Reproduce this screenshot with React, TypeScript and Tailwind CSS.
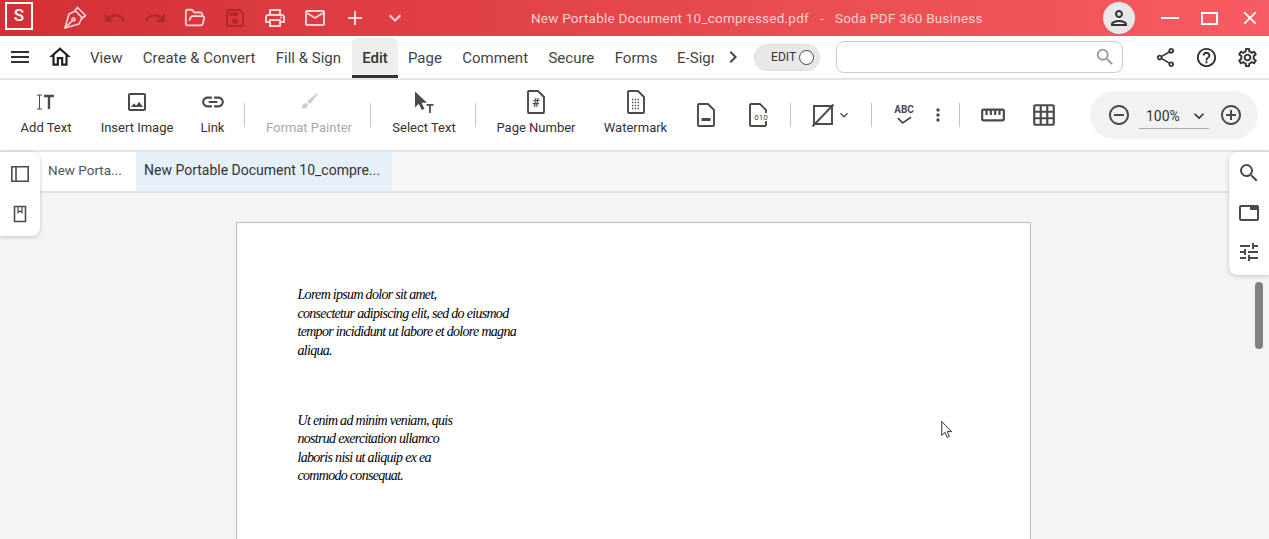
import React from 'react';
import {
  MdMenu, MdOutlineHome, MdUndo, MdRedo, MdOutlinePrint, MdMailOutline, MdAdd, MdExpandMore,
  MdOutlinePerson, MdClose, MdChevronRight, MdSearch, MdOutlineShare, MdHelpOutline, MdOutlineSettings,
  MdOutlineImage, MdLink, MdMoreVert, MdGridOn, MdOutlineStraighten, MdRemoveCircleOutline, MdAddCircleOutline,
  MdTune, MdOutlineSave,
} from 'react-icons/md';
import { FolderOpen } from 'lucide-react';

const tabs = ['View', 'Create & Convert', 'Fill & Sign', 'Edit', 'Page', 'Comment', 'Secure', 'Forms'];

function PenNib() {
  return (
    <svg viewBox="0 0 24 24" className="w-6 h-6" fill="none" stroke="currentColor" strokeWidth="1.7" strokeLinejoin="round">
      <path d="M14.500 1.500 22.500 9.500 19.500 12 12 4.500Z" />
      <path d="M12.500 5 6 8 2 22l14-4 3-6.500" />
      <path d="M2 22l7-7" />
      <circle cx="10.500" cy="13.500" r="1.500" />
    </svg>
  );
}

function ToolButton({ icon, label, disabled, w }: { icon: React.ReactNode; label: string; disabled?: boolean; w: string }) {
  return (
    <div className={`flex flex-col items-center shrink-0 -mt-[6px] ${w} ${disabled ? 'text-[#aaaaaa]' : 'text-[#333333]'}`}>
      <div className={`h-[26px] flex items-center justify-center ${disabled ? 'text-[#cccccc]' : 'text-[#4a4a4a]'}`}>{icon}</div>
      <span className="text-[13px] leading-4 mt-[5px] whitespace-nowrap">{label}</span>
    </div>
  );
}

function Divider() {
  return <div className="w-px h-6 bg-[#c4c4c4] shrink-0" />;
}

function DocShape({ children }: { children?: React.ReactNode }) {
  return (
    <svg viewBox="0 0 20 24" className="w-5 h-6" fill="none" stroke="currentColor" strokeWidth="1.900">
      <path d="M3 1h9l6 6v15a1 1 0 0 1-1 1H3a1 1 0 0 1-1-1V2a1 1 0 0 1 1-1Z" strokeLinejoin="round" />
      {children}
    </svg>
  );
}

export default function App() {
  return (
    <div className="relative w-[1269px] h-[539px] overflow-hidden bg-[#f4f4f4] font-['Roboto',sans-serif] flex flex-col">
      {/* title bar */}
      <div className="h-9 shrink-0 flex items-center bg-gradient-to-r from-[#d32f36] to-[#f75c62] text-white">
        <div className="ml-[5px] mb-[4px] w-[28px] h-[28px] border-2 border-white flex items-center justify-center text-[17px] font-medium">S</div>
        <div className="flex items-center ml-[30px] gap-[16px]">
          <span className="text-[#fbd5d6]"><PenNib /></span>
          <MdUndo className="w-6 h-6 text-[#b3282e]" />
          <MdRedo className="w-6 h-6 text-[#b3282e]" />
          <FolderOpen className="w-[22px] h-[22px] mx-[1px] text-[#fbd5d6]" strokeWidth={2} />
          <MdOutlineSave className="w-6 h-6 text-[#b3282e]" />
          <MdOutlinePrint className="w-6 h-6 text-[#fbd5d6]" />
          <MdMailOutline className="w-6 h-6 text-[#fbd5d6]" />
          <MdAdd className="w-6 h-6 text-[#fbdcdd]" />
          <MdExpandMore className="w-6 h-6 text-[#fbdcdd]" />
        </div>
        <div className="ml-[124px] flex text-[13.500px] text-[#fbd0d2] whitespace-nowrap tracking-[0.230px]">
          <span>New Portable Document 10_compressed.pdf</span>
          <span className="mx-[11px]">-</span>
          <span>Soda PDF 360 Business</span>
        </div>
        <div className="ml-auto flex items-center">
          <div className="w-8 h-8 rounded-full bg-[#e8e8e8] flex items-center justify-center text-[#333333]">
            <MdOutlinePerson className="w-6 h-6" />
          </div>
          <div className="ml-[26px] w-[18px] h-[2px] bg-white" />
          <div className="ml-[22px] w-[17px] h-[13px] border-2 border-white" />
          <MdClose className="ml-[21px] mr-[8px] w-[22px] h-[22px]" />
        </div>
      </div>

      {/* menu row */}
      <div className="h-[44px] shrink-0 bg-white border-b-2 border-[#e6e6e6] flex items-center text-[#444444]">
        <MdMenu className="ml-[8px] w-6 h-6 text-[#333333]" />
        <MdOutlineHome className="ml-[15px] w-[26px] h-[26px] text-[#222222]" />
        <div className="ml-[6.800px] flex items-center h-full text-[15px]">
          {tabs.map((t) => (
            <div
              key={t}
              className={
                t === 'Edit'
                  ? 'h-[40px] self-end ml-[1px] flex items-center px-[10px] pt-[3px] bg-[#eeeeee] rounded-t-md border-b-[3px] border-[#333333] font-medium text-[#333333]'
                  : 'h-full flex items-center px-[10.200px] pt-[2px]'
              }
            >
              {t}
            </div>
          ))}
          <div className="w-[37px] ml-[9.500px] overflow-hidden whitespace-nowrap pt-[2px]">E-Sign</div>
        </div>
        <MdChevronRight className="ml-[7px] w-6 h-6 text-[#444444]" />
        <div className="ml-[9px] w-[66px] h-[27px] rounded-full bg-[#e8e8e8] border border-[#dddddd] flex items-center justify-end pr-[5px] gap-[3px]">
          <span className="text-xs text-[#333333]">EDIT</span>
          <span className="w-[15px] h-[15px] rounded-full bg-white border border-[#444444]" />
        </div>
        <div className="ml-[16px] w-[287px] h-[32px] rounded-lg border border-[#cccccc] flex items-center justify-end pr-[6px] text-[#999999]">
          <MdSearch className="w-[22px] h-[22px]" />
        </div>
        <MdOutlineShare className="ml-[31px] w-[23px] h-[23px] text-[#333333]" />
        <MdHelpOutline className="ml-[18px] w-[23px] h-[23px] text-[#333333]" />
        <MdOutlineSettings className="ml-[18px] w-[23px] h-[23px] text-[#333333]" />
      </div>

      {/* tool row */}
      <div className="h-[72px] shrink-0 bg-white border-b-2 border-[#e4e4e4] flex items-center">
        <ToolButton
          w="w-[52px] ml-[20px]"
          label="Add Text"
          icon={
            <svg viewBox="0 0 20 20" className="w-[20px] h-[20px]" fill="none" stroke="#4a4a4a">
              <path d="M1 3h5M1 17h5M3.500 3v14" strokeWidth="1" />
              <path d="M8 4h10M13 4v13" strokeWidth="2.400" />
            </svg>
          }
        />
        <ToolButton w="w-[74px] ml-[28px]" label="Insert Image" icon={<MdOutlineImage className="w-6 h-6" />} />
        <ToolButton w="w-[25px] ml-[26px]" label="Link" icon={<MdLink className="w-[26px] h-[26px]" />} />
        <div className="ml-[19px]"><Divider /></div>
        <ToolButton
          w="w-[86px] ml-[21px]"
          label="Format Painter"
          disabled
          icon={
            <svg viewBox="0 0 24 24" className="w-6 h-6" fill="currentColor">
              <path d="M19.500 3.500c.700-.500 1.500.300 1 1l-7.500 9.500-3-2.500Z" />
              <path d="M9 13c-2 0-3 1-3.300 2.500-.200 1-.700 1.700-1.700 2.200 1.700 1 4.500 1 6-.500 1-1 1-2.500.700-3Z" />
            </svg>
          }
        />
        <div className="ml-[18px]"><Divider /></div>
        <ToolButton
          w="w-[64px] ml-[21px]"
          label="Select Text"
          icon={
            <svg viewBox="0 0 24 24" className="w-6 h-6" fill="#4a4a4a">
              <path d="M3 1.500v16l3.800-3.800 2.900 6.300 2.700-1.200-2.800-6.100h5.400Z" />
              <path d="M14.500 14h7v1.800h-2.600V23h-1.800v-7.200h-2.600Z" />
            </svg>
          }
        />
        <div className="ml-[19px]"><Divider /></div>
        <ToolButton
          w="w-[78px] ml-[21px]"
          label="Page Number"
          icon={
            <DocShape>
              <text x="10" y="17" textAnchor="middle" fontSize="12" fontWeight="700" fill="currentColor" stroke="none">#</text>
            </DocShape>
          }
        />
        <ToolButton
          w="w-[65px] ml-[28px]"
          label="Watermark"
          icon={
            <DocShape>
              <path d="M6 9.500h8M6 12.500h8M6 15.500h8M6 18.500h8" strokeWidth="1.400" strokeDasharray="1.400 1.400" />
            </DocShape>
          }
        />
        <div className="ml-[28px] text-[#4a4a4a]">
          <DocShape><path d="M5.500 16.500h9" strokeWidth="3" /></DocShape>
        </div>
        <div className="ml-[32px] text-[#4a4a4a]">
          <DocShape>
            <rect x="14" y="10" width="6" height="8" fill="white" stroke="none" />
            <text x="13" y="17" textAnchor="middle" fontSize="8" fill="currentColor" stroke="none">010</text>
          </DocShape>
        </div>
        <div className="ml-[22px]"><Divider /></div>
        <div className="ml-[20px] flex items-center text-[#4a4a4a]">
          <svg viewBox="0 0 24 24" className="w-6 h-6" fill="none" stroke="currentColor" strokeWidth="1.900">
            <path d="M3 3h18v18H3Z" />
            <path d="M1.500 23.500 22.500 1.500" />
          </svg>
          <MdExpandMore className="ml-[1px] w-4 h-4" />
        </div>
        <div className="ml-[19px]"><Divider /></div>
        <div className="ml-[20px] flex flex-col items-center w-[24px] text-[#4a4a4a]">
          <span className="text-[10px] leading-[10px] font-bold">ABC</span>
          <svg viewBox="0 0 16 9" className="w-[15px] h-[9px] mt-[1px]" fill="none" stroke="currentColor" strokeWidth="1.800"><path d="M1 2l5 5 9-6" /></svg>
        </div>
        <MdMoreVert className="ml-[12px] w-[20px] h-[20px] text-[#4a4a4a]" />
        <div className="ml-[11px]"><Divider /></div>
        <MdOutlineStraighten className="ml-[20px] w-[26px] h-[26px] text-[#4a4a4a]" />
        <MdGridOn className="ml-[25px] w-[26px] h-[26px] text-[#4a4a4a]" />
        <div className="ml-[33px] w-[168px] h-[48px] rounded-full bg-[#f2f2f2] flex items-center pl-[17px] pr-[15px] text-[#4a4a4a]">
          <MdRemoveCircleOutline className="w-6 h-6 shrink-0" />
          <div className="ml-[8px] w-[73px] h-[26px] mt-[2px] pt-[1px] border-b border-[#aaaaaa] flex items-center pl-[7px] text-sm text-[#333333]">
            100%
            <MdExpandMore className="ml-auto w-5 h-5" />
          </div>
          <MdAddCircleOutline className="ml-[10px] w-6 h-6 shrink-0" />
        </div>
      </div>

      {/* document tabs */}
      <div className="h-[41px] shrink-0 flex border-b-2 border-[#e4e4e4] bg-[#f6f6f6]">
        <div className="w-[136px] bg-white pl-[48px] pb-[2px] flex items-center text-[13.500px] text-[#555555]">New Porta...</div>
        <div className="w-[256px] bg-[#e6f0fa] pl-[8px] pb-[3px] flex items-center text-sm text-[#333333]">New Portable Document 10_compre...</div>
      </div>

      {/* document area */}
      <div className="flex-1 min-h-0 flex justify-center pt-[29px] pr-[3px] overflow-hidden">
        <div className="w-[795px] h-[500px] shrink-0 bg-white border border-[#bcbcbc] pl-[61px] pt-[63px] text-black font-['Liberation_Serif',serif] italic text-[14px] leading-[18.500px] tracking-[-0.700px]">
          <p>Lorem ipsum dolor sit amet,</p>
          <p>consectetur adipiscing elit, sed do eiusmod</p>
          <p>tempor incididunt ut labore et dolore magna</p>
          <p>aliqua.</p>
          <p className="mt-[51.500px]">Ut enim ad minim veniam, quis</p>
          <p>nostrud exercitation ullamco</p>
          <p>laboris nisi ut aliquip ex ea</p>
          <p>commodo consequat.</p>
        </div>
      </div>

      {/* floating left panel */}
      <div className="absolute left-0 top-[152px] w-[40px] h-[84px] bg-white rounded-r-lg shadow-[0_1px_4px_rgba(0,0,0,0.2)] flex flex-col items-center pt-[13px] gap-[22px] text-[#4a4a4a]">
        <svg viewBox="0 0 20 18" className="w-[20px] h-[18px]" fill="none" stroke="currentColor" strokeWidth="1.600">
          <path d="M1.800 1.800h16.400v14.400H1.800ZM6 1.800v14.400" />
        </svg>
        <svg viewBox="0 0 14 18" className="w-[14px] h-[18px]" fill="none" stroke="currentColor" strokeWidth="1.600">
          <path d="M1.500 1.500h11v15h-11Z" />
          <path d="M5 1.500v6l2-1.500 2 1.500v-6" strokeWidth="1.200" />
        </svg>
      </div>

      {/* floating right panel */}
      <div className="absolute right-0 top-[152px] w-[40px] h-[123px] bg-white rounded-l-lg shadow-[0_1px_4px_rgba(0,0,0,0.2)] flex flex-col items-center pt-[9px] text-[#4a4a4a]">
        <MdSearch className="w-6 h-6" />
        <svg viewBox="0 0 20 16" className="mt-[20px] w-[20px] h-[16px]" fill="currentColor">
          <path fillRule="evenodd" d="M2 0h16a2 2 0 0 1 2 2v12a2 2 0 0 1-2 2H2a2 2 0 0 1-2-2V2a2 2 0 0 1 2-2Zm0 2v12h16V5h-7V2Z" />
        </svg>
        <MdTune className="mt-[19px] w-6 h-6" />
      </div>

      {/* scrollbar thumb */}
      <div className="absolute left-[1255px] top-[282px] w-[8px] h-[67px] rounded-full bg-[#808080]" />

      {/* mouse cursor */}
      <svg viewBox="0 0 14 20" className="absolute left-[941px] top-[420px] w-[13px] h-[20px]" fill="white" stroke="#222222" strokeWidth="1">
        <path d="M.800.800v15l3.500-3.200 2.300 5.400 2.400-1-2.300-5.300h4.700Z" />
      </svg>
    </div>
  );
}
